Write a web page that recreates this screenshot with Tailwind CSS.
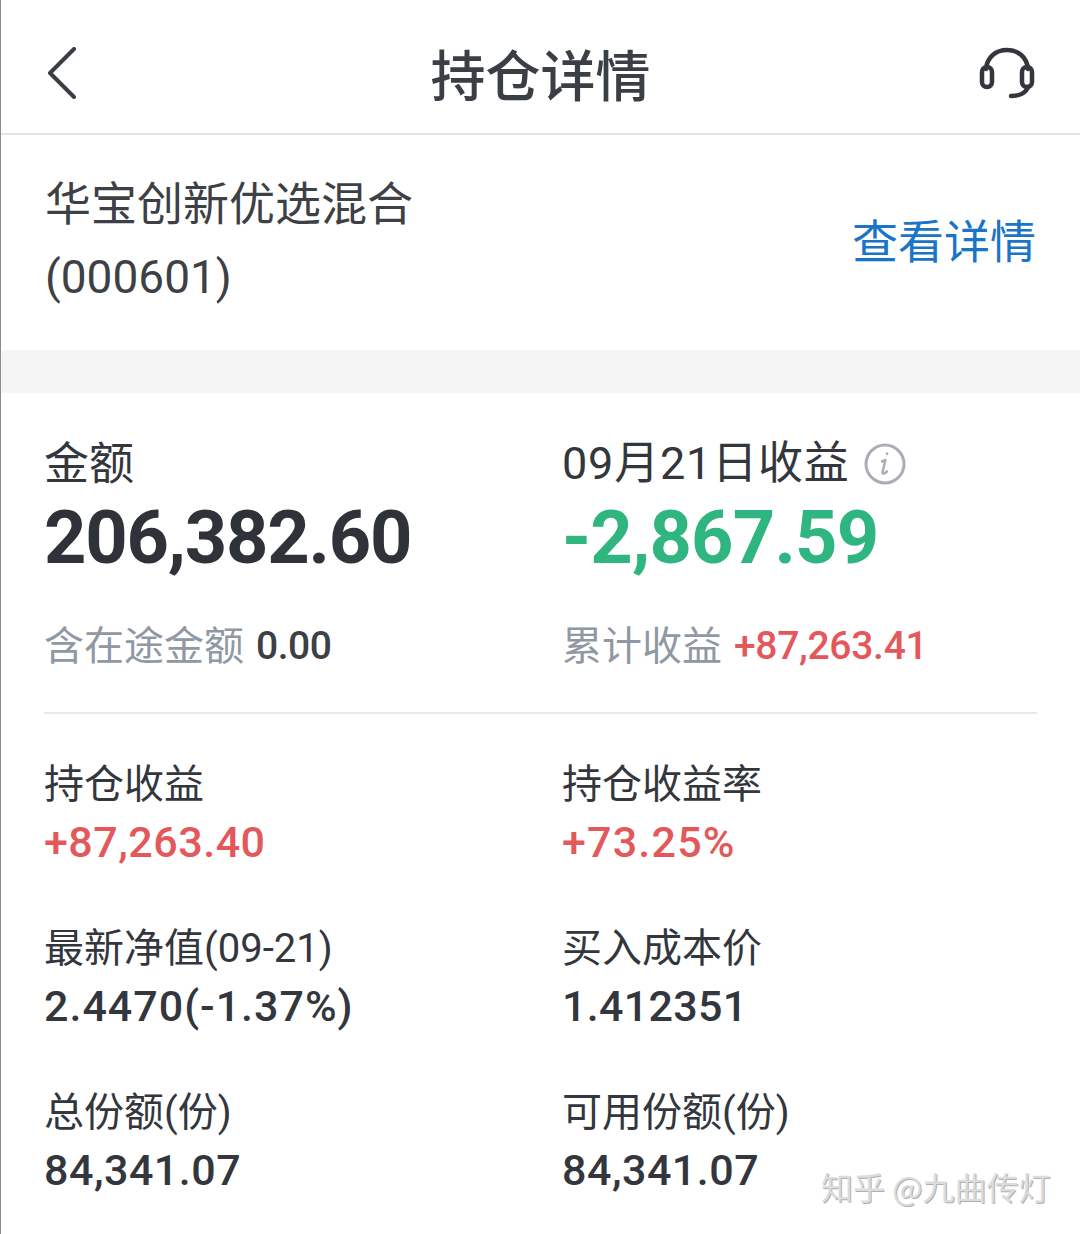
<!DOCTYPE html>
<html lang="zh-CN">
<head>
  <meta charset="utf-8">
  <title>持仓详情</title>
  <script src="https://cdn.jsdelivr.net/npm/@tailwindcss/browser@4"></script>
</head>
<body class="bg-white font-['Roboto','Noto_Sans_CJK_SC',sans-serif] text-[#33373d]">
  <div class="relative h-[1234px] w-[1080px] overflow-hidden border-l border-[#8b8d91]">

    <!-- header -->
    <header class="grid h-[135px] grid-cols-[1fr_auto_1fr] items-center border-b-2 border-[#e4e5e7] pt-[12px] pr-[45px] pl-[45px]">
      <svg class="h-[52px] w-[32px]" viewBox="0 0 32 52" fill="none" stroke="#3a3e45" stroke-width="4" stroke-linecap="round" stroke-linejoin="round">
        <path d="M28 2 4 26l24 24" />
      </svg>
      <h1 class="font-['Noto_Sans_CJK_SC',sans-serif] text-[55px] leading-none font-medium text-[#3a3e45]">持仓详情</h1>
      <svg class="h-[52px] w-[56px] justify-self-end" viewBox="0 0 56 52" fill="none" stroke="#33373d" stroke-width="4.5" stroke-linecap="round">
        <path d="M7 22C8 10 17 3 28 3s20 7 21 19" />
        <rect x="3" y="20" width="10" height="20" rx="5" />
        <rect x="43" y="20" width="10" height="20" rx="5" />
        <path d="M49 40c-2 6-9 9-17 9" />
      </svg>
    </header>

    <!-- fund -->
    <section class="flex h-[215px] items-center justify-between pr-[44px] pl-[44px] pb-[4px]">
      <div class="text-[46px] text-[#3d4045]">
        <div class="mb-[8px] font-['Noto_Sans_CJK_SC',sans-serif] leading-[65px]">华宝创新优选混合</div>
        <div class="leading-[73px]">(000601)</div>
      </div>
      <a class="mb-[6px] font-['Noto_Sans_CJK_SC',sans-serif] text-[46px] leading-none text-[#1a75c9]">查看详情</a>
    </section>

    <div class="h-[43px] bg-[#f5f5f5]"></div>

    <!-- amount -->
    <section class="mx-[43px] grid h-[321px] grid-cols-[518px_1fr] border-b-2 border-[#e8e9eb] pt-[38px]">
      <div>
        <div class="h-[60px] font-['Noto_Sans_CJK_SC',sans-serif] text-[45px] leading-[60px]">金额</div>
        <div class="mt-[6px] h-[82px] text-[74px] leading-[82px] font-bold tracking-[-1.2px] text-[#2f3238]">206,382.60</div>
        <div class="mt-[40px] flex h-[50px] items-center gap-[12px] text-[40px] leading-[50px]">
          <span class="mb-[2px] font-['Noto_Sans_CJK_SC',sans-serif] text-[#8f98a3]">含在途金额</span>
          <span class="pt-[4px] text-[39px] font-medium tracking-[-0.5px] text-[#3d4045]">0.00</span>
        </div>
      </div>
      <div>
        <div class="flex h-[60px] items-center gap-[14px] pt-[6px] text-[45px] leading-[54px] tracking-[0.8px]">
          <span>09月21日收益</span>
          <svg class="h-[42px] w-[42px]" viewBox="0 0 42 42" fill="none" stroke="#a9aeb8" stroke-width="3">
            <circle cx="21" cy="21" r="19" />
            <path d="M23 10.500v.5M21.500 17 18 18.500M21.500 17l-3 12c-.4 2 1.500 2.500 4.500-.5" stroke-width="2.500" stroke-linecap="round" />
          </svg>
        </div>
        <div class="mt-[6px] h-[82px] text-[74px] leading-[82px] font-bold tracking-[-0.8px] text-[#2fb57f]">-2,867.59</div>
        <div class="mt-[40px] flex h-[50px] items-center gap-[12px] text-[40px] leading-[50px]">
          <span class="mb-[2px] font-['Noto_Sans_CJK_SC',sans-serif] text-[#8f98a3]">累计收益</span>
          <span class="pt-[4px] text-[39px] font-medium tracking-[-0.3px] text-[#e4585b]">+87,263.41</span>
        </div>
      </div>
    </section>

    <!-- stats -->
    <section class="ml-[43px] grid grid-cols-[518px_1fr] gap-y-[55px] pt-[45px] text-[40px] leading-[52px]">
      <div>
        <div>持仓收益</div>
        <div class="mt-[5px] text-[43px] leading-[52px] font-medium tracking-[0.5px] text-[#e4585b]">+87,263.40</div>
      </div>
      <div>
        <div>持仓收益率</div>
        <div class="mt-[5px] text-[43px] leading-[52px] font-medium tracking-[1.2px] text-[#e4585b]">+73.25%</div>
      </div>
      <div>
        <div>最新净值(09-21)</div>
        <div class="mt-[5px] text-[43px] leading-[52px] font-medium tracking-[1px]">2.4470(-1.37%)</div>
      </div>
      <div>
        <div>买入成本价</div>
        <div class="mt-[5px] text-[43px] leading-[52px] font-medium tracking-[0.3px]">1.412351</div>
      </div>
      <div>
        <div>总份额(份)</div>
        <div class="mt-[5px] text-[43px] leading-[52px] font-medium tracking-[0.5px]">84,341.07</div>
      </div>
      <div>
        <div>可用份额(份)</div>
        <div class="mt-[5px] text-[43px] leading-[52px] font-medium tracking-[0.5px]">84,341.07</div>
      </div>
    </section>

    <!-- watermark -->
    <div class="absolute top-[1166px] left-[820px] font-['Noto_Sans_CJK_SC',sans-serif] text-[32px] leading-[40px] whitespace-nowrap text-[#dcdcdc] [text-shadow:1px_1px_0_#b0b0b0]">知乎 @九曲传灯</div>
  </div>
</body>
</html>
